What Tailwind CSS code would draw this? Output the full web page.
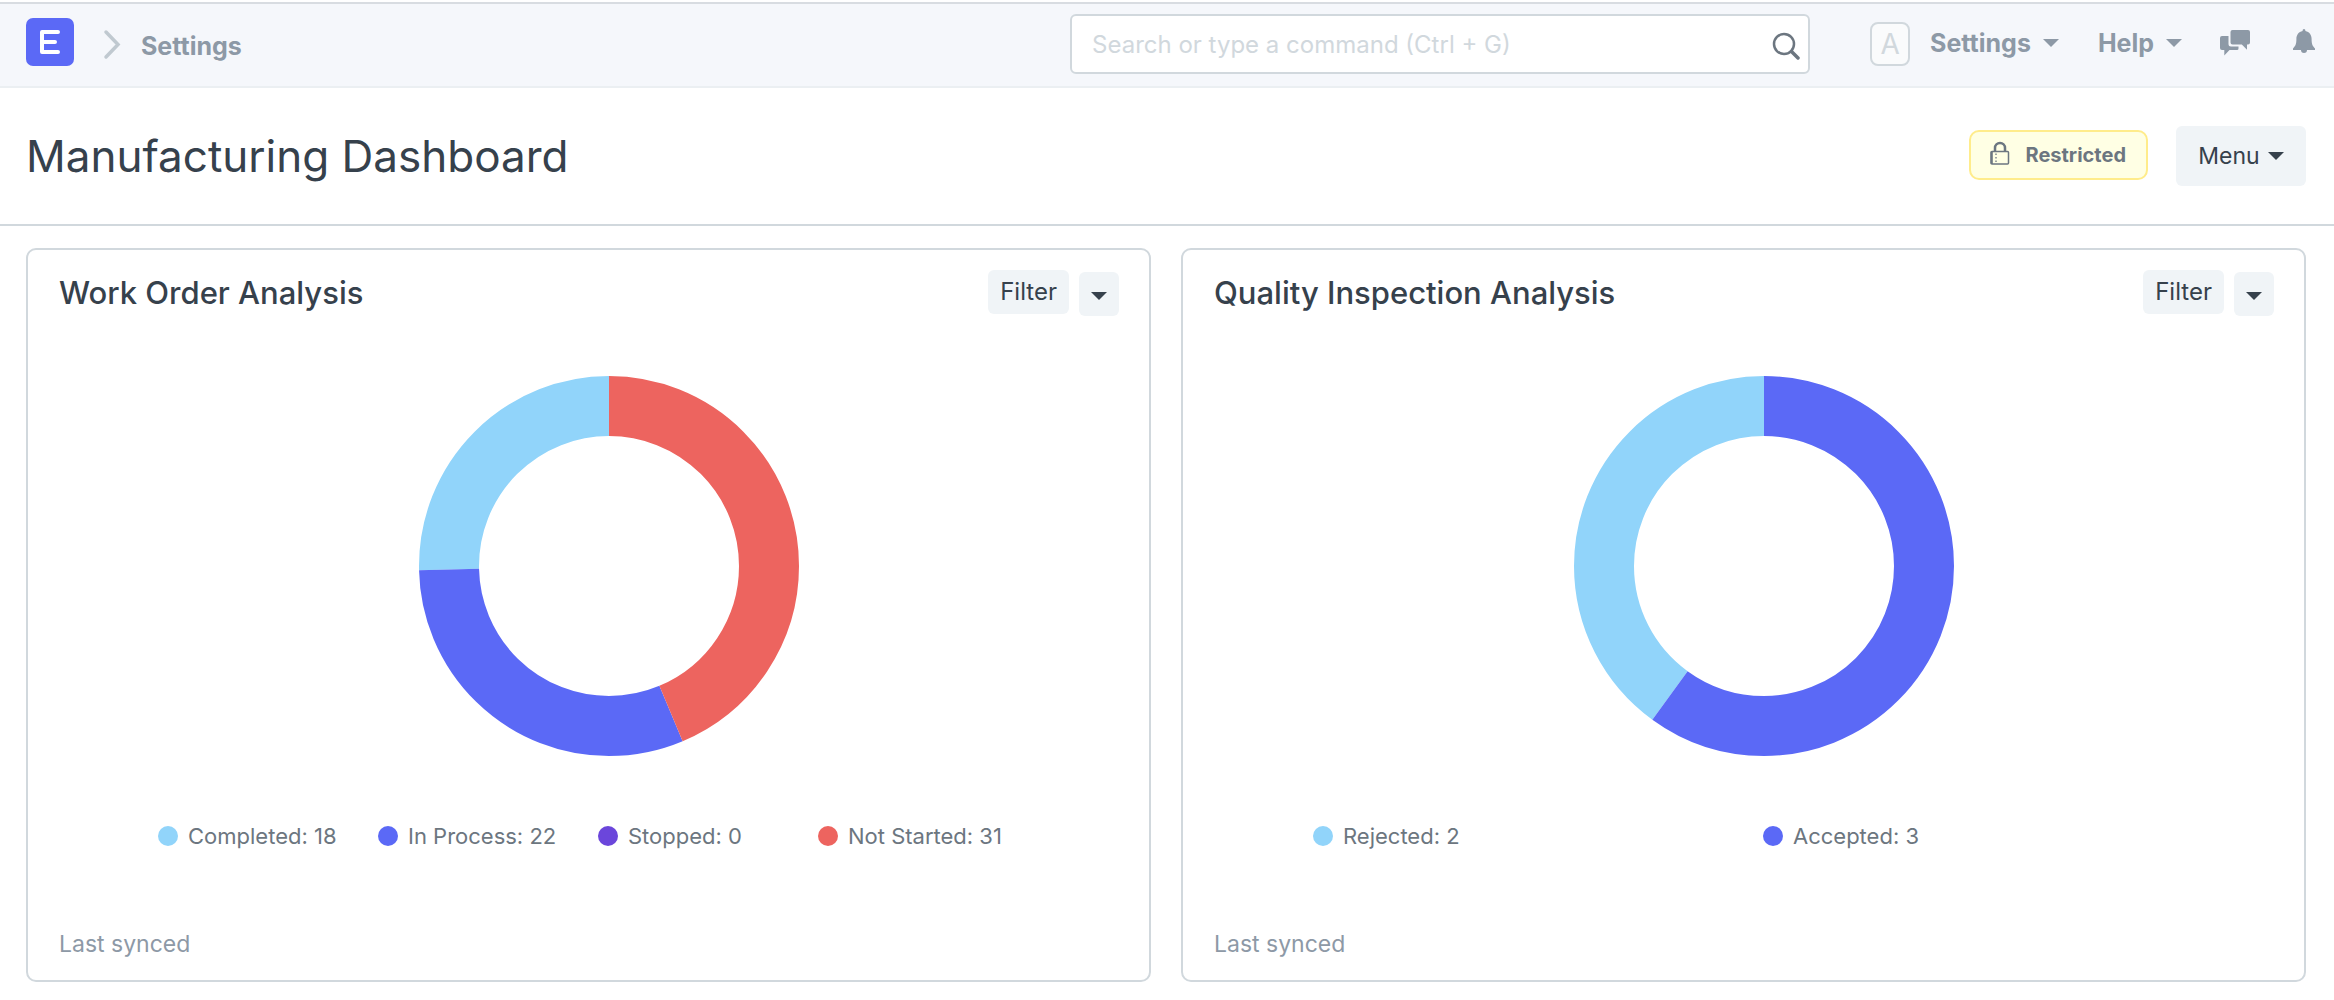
<!DOCTYPE html>
<html lang="en">
<head>
<meta charset="utf-8">
<title>Manufacturing Dashboard</title>
<script src="https://cdn.jsdelivr.net/npm/@tailwindcss/browser@4"></script>
</head>
<body class="bg-white pt-0.5 font-['Inter',sans-serif] text-[#36414c]">

<header class="flex h-[86px] items-center border-y-2 border-t-[#d8dce1] border-b-[#ebeff2] bg-[#f5f7fb] pr-[19px] pb-0.5 pl-[26px] text-[25px] font-bold text-[#8d99a6]">
  <a href="#" aria-label="Home" class="mb-1">
    <svg class="size-12" viewBox="0 0 48 48">
      <rect width="48" height="48" rx="7" fill="#5b69f6"/>
      <path d="M32 14H16v20h16M16 24h13" fill="none" stroke="#fff" stroke-width="4" stroke-linecap="round" stroke-linejoin="round"/>
    </svg>
  </a>
  <svg class="ml-[29px] h-8 w-5" viewBox="0 0 20 32" fill="none" stroke="#c0c9d0" stroke-width="3.500" stroke-linecap="round"><path d="M3 4L15 16.500 3 29"/></svg>
  <a href="#" class="mt-1 ml-[18px] leading-8">Settings</a>

  <div class="relative ml-auto w-[740px]">
    <input type="text" aria-label="Search" placeholder="Search or type a command (Ctrl + G)" class="h-[60px] w-full rounded-md border-2 border-[#d1d8dd] bg-white pr-14 pl-5 text-2xl font-normal text-[#36414c] placeholder:text-[#d1d8dd]">
    <svg class="absolute top-[18px] right-2.5 size-7" viewBox="0 0 28 28" fill="none" stroke="#6c7680" stroke-width="2.500" stroke-linecap="round"><circle cx="12" cy="12" r="10"/><path d="M19.500 19.500l6.500 6.500" stroke-width="3.500"/></svg>
  </div>

  <a href="#" class="ml-[60px] flex h-11 w-10 items-center justify-center rounded-lg border-2 border-[#d1d8dd] bg-[#fafbfc] text-[28px] font-normal text-[#d1d8dd]">A</a>
  <button type="button" class="mb-0.5 ml-5 flex items-center gap-3 leading-8">Settings
    <svg class="h-2 w-4" viewBox="0 0 16 8" fill="currentColor"><path d="M0 0h16L8 8z"/></svg>
  </button>
  <button type="button" class="mb-0.5 ml-[39px] flex items-center gap-3 leading-8">Help
    <svg class="h-2 w-4" viewBox="0 0 16 8" fill="currentColor"><path d="M0 0h16L8 8z"/></svg>
  </button>
  <a href="#" aria-label="Chat" class="mb-0.5 ml-[38px]">
    <svg class="h-[26px] w-[30px]" viewBox="0 0 30 26" fill="currentColor">
      <path d="M12.500 0H28a2 2 0 0 1 2 2v10.500a2 2 0 0 1-2 2h-1v5.200l-5.200-5.200h-9.300a2 2 0 0 1-2-2V2a2 2 0 0 1 2-2z"/>
      <path d="M2 6h6.500v8a2.500 2.500 0 0 0 2.500 2.500h7.500V18.500a1.500 1.500 0 0 1-1.500 1.500H9.500L4.300 25.500V20H2a2 2 0 0 1-2-2V8a2 2 0 0 1 2-2z"/>
    </svg>
  </a>
  <a href="#" aria-label="Notifications" class="mb-1 ml-[43px]">
    <svg class="h-[26px] w-[22px]" viewBox="0 0 22 26" fill="currentColor"><path d="M11 0c.9 0 1.400.8 1.400 2 4 .7 6.200 4 6.200 8 0 5 .9 7 3.400 9.400v1.600h-8a3 3 0 0 1-6 0H0v-1.600C2.500 17 3.400 15 3.400 10c0-4 2.200-7.300 6.200-8C9.600.8 10.100 0 11 0z"/></svg>
  </a>
</header>

<div class="flex h-[138px] items-center border-b-2 border-[#d1d8dd] pr-7 pl-[26px]">
  <h1 class="text-[44px] leading-[60px]">Manufacturing Dashboard</h1>
  <div class="mr-7 mb-0.5 ml-auto flex h-[50px] items-center gap-4 rounded-[10px] border-2 border-[#ffec8b] bg-[#ffffe4] pr-5 pl-[19px] text-xl font-bold text-[#6c7680]">
    <svg class="mb-1 h-6 w-5" viewBox="0 0 20 24" fill="none" stroke="currentColor">
      <path d="M5 10V7a5 5 0 0 1 10 0v3" stroke-width="2.500"/>
      <rect x="1" y="10.500" width="17.500" height="12.500" rx="1" stroke-width="1.500"/>
      <path d="M1.800 10.500v12.500" stroke-width="2"/>
      <path d="M6 12.500v9" stroke-width="1.300" stroke-dasharray="1.500 2"/>
    </svg>
    Restricted
  </div>
  <button type="button" class="flex h-[60px] w-[130px] items-center justify-center gap-2 rounded-md bg-[#f0f4f7] text-[23px]">Menu
    <svg class="h-2 w-4" viewBox="0 0 16 8" fill="currentColor"><path d="M0 0h16L8 8z"/></svg>
  </button>
</div>

<main class="grid grid-cols-2 gap-[30px] pt-[22px] pr-7 pb-[18px] pl-[26px]">
  <section class="rounded-[10px] border-2 border-[#d1d8dd] pt-5 pr-[30px] pb-5 pl-[31px]">
    <div class="flex items-start">
      <h2 class="text-[31px] leading-[46px] font-medium">Work Order Analysis</h2>
      <button type="button" class="ml-auto h-11 rounded-md bg-[#f0f4f7] px-3 text-2xl">Filter</button>
      <button type="button" aria-label="Chart options" class="mt-0.5 ml-2.5 flex h-11 w-10 items-center justify-center rounded-md bg-[#f0f4f7]">
        <svg class="mt-1 h-2 w-4" viewBox="0 0 16 8" fill="currentColor"><path d="M0 0h16L8 8z"/></svg>
      </button>
    </div>
    <div class="mt-[60px] flex justify-center pl-10">
      <svg class="size-[380px] -rotate-90" viewBox="0 0 380 380" fill="none" stroke-width="60" role="img" aria-label="Work orders by status">
        <circle cx="190" cy="190" r="160" pathLength="71" stroke="#91d4fa" stroke-dasharray="18 53" stroke-dashoffset="-53"/>
        <circle cx="190" cy="190" r="160" pathLength="71" stroke="#5b69f6" stroke-dasharray="22 49" stroke-dashoffset="-31"/>
        <circle cx="190" cy="190" r="160" pathLength="71" stroke="#ed645f" stroke-dasharray="31 40"/>
      </svg>
    </div>
    <ul class="mt-16 mr-[81px] ml-[99px] grid grid-cols-4 text-[22px] leading-8 whitespace-nowrap text-[#6c7680]">
      <li class="flex items-center gap-2.5"><span class="size-5 rounded-full bg-[#91d4fa]"></span>Completed: 18</li>
      <li class="flex items-center gap-2.5"><span class="size-5 rounded-full bg-[#5b69f6]"></span>In Process: 22</li>
      <li class="flex items-center gap-2.5"><span class="size-5 rounded-full bg-[#6b46db]"></span>Stopped: 0</li>
      <li class="flex items-center gap-2.5"><span class="size-5 rounded-full bg-[#ed645f]"></span>Not Started: 31</li>
    </ul>
    <p class="mt-[76px] text-[23px] leading-8 text-[#8d99a6]">Last synced</p>
  </section>

  <section class="rounded-[10px] border-2 border-[#d1d8dd] pt-5 pr-[30px] pb-5 pl-[31px]">
    <div class="flex items-start">
      <h2 class="text-[31px] leading-[46px] font-medium">Quality Inspection Analysis</h2>
      <button type="button" class="ml-auto h-11 rounded-md bg-[#f0f4f7] px-3 text-2xl">Filter</button>
      <button type="button" aria-label="Chart options" class="mt-0.5 ml-2.5 flex h-11 w-10 items-center justify-center rounded-md bg-[#f0f4f7]">
        <svg class="mt-1 h-2 w-4" viewBox="0 0 16 8" fill="currentColor"><path d="M0 0h16L8 8z"/></svg>
      </button>
    </div>
    <div class="mt-[60px] flex justify-center pl-10">
      <svg class="size-[380px] -rotate-90" viewBox="0 0 380 380" fill="none" stroke-width="60" role="img" aria-label="Quality inspections by status">
        <circle cx="190" cy="190" r="160" pathLength="5" stroke="#91d4fa" stroke-dasharray="2 3" stroke-dashoffset="-3"/>
        <circle cx="190" cy="190" r="160" pathLength="5" stroke="#5b69f6" stroke-dasharray="3 2"/>
      </svg>
    </div>
    <ul class="mt-16 mr-[61px] ml-[99px] grid grid-cols-2 text-[22px] leading-8 whitespace-nowrap text-[#6c7680]">
      <li class="flex items-center gap-2.5"><span class="size-5 rounded-full bg-[#91d4fa]"></span>Rejected: 2</li>
      <li class="flex items-center gap-2.5"><span class="size-5 rounded-full bg-[#5b69f6]"></span>Accepted: 3</li>
    </ul>
    <p class="mt-[76px] text-[23px] leading-8 text-[#8d99a6]">Last synced</p>
  </section>
</main>

</body>
</html>
